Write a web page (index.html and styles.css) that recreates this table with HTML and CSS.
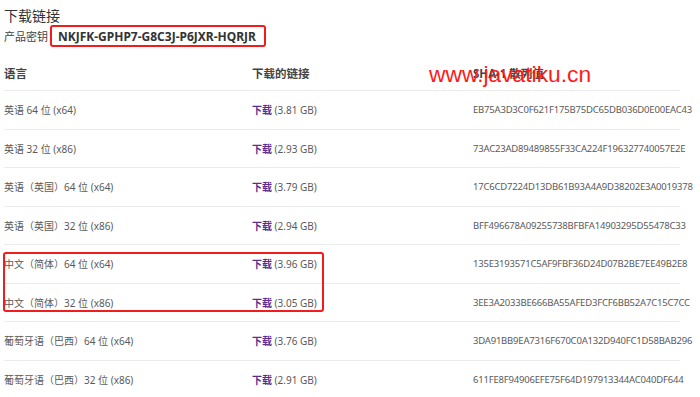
FILE: index.html
```html
<!DOCTYPE html>
<html lang="zh-CN">
<head>
  <meta charset="UTF-8" />
  <title>下载链接</title>
  <link rel="stylesheet" href="styles.css">
</head>
<body>
  <div class="page">
    <h2 class="title">下载链接</h2>
    <div class="key-line">
      <span class="key-label">产品密钥：</span>
      <span class="key-box">NKJFK-GPHP7-G8C3J-P6JXR-HQRJR</span>
    </div>

    <div class="downloads">
      <div class="row head">
        <div>语言</div>
        <div>下载的链接</div>
        <div>SHA-1 散列值</div>
      </div>

      <div class="row">
        <div>英语 64 位 (x64)</div>
        <div><a href="#">下载</a> (3.81 GB)</div>
        <div class="hash">EB75A3D3C0F621F175B75DC65DB036D0E00EAC43</div>
      </div>
      <div class="row">
        <div>英语 32 位 (x86)</div>
        <div><a href="#">下载</a> (2.93 GB)</div>
        <div class="hash">73AC23AD89489855F33CA224F196327740057E2E</div>
      </div>
      <div class="row">
        <div>英语（英国）64 位 (x64)</div>
        <div><a href="#">下载</a> (3.79 GB)</div>
        <div class="hash">17C6CD7224D13DB61B93A4A9D38202E3A0019378</div>
      </div>
      <div class="row">
        <div>英语（英国）32 位 (x86)</div>
        <div><a href="#">下载</a> (2.94 GB)</div>
        <div class="hash">BFF496678A09255738BFBFA14903295D55478C33</div>
      </div>

      <!-- 标红的两行 -->
      <div class="highlight">
        <div class="row">
          <div>中文（简体）64 位 (x64)</div>
          <div><a href="#">下载</a> (3.96 GB)</div>
          <div class="hash">135E3193571C5AF9FBF36D24D07B2BE7EE49B2E8</div>
        </div>
        <div class="row">
          <div>中文（简体）32 位 (x86)</div>
          <div><a href="#">下载</a> (3.05 GB)</div>
          <div class="hash">3EE3A2033BE666BA55AFED3FCF6BB52A7C15C7CC</div>
        </div>
      </div>

      <div class="row">
        <div>葡萄牙语（巴西）64 位 (x64)</div>
        <div><a href="#">下载</a> (3.76 GB)</div>
        <div class="hash">3DA91BB9EA7316F670C0A132D940FC1D58BAB296</div>
      </div>
      <div class="row">
        <div>葡萄牙语（巴西）32 位 (x86)</div>
        <div><a href="#">下载</a> (2.91 GB)</div>
        <div class="hash">611FE8F94906EFE75F64D197913344AC040DF644</div>
      </div>
    </div>
  </div>

  <div class="watermark">www.javatiku.cn</div>
</body>
</html>
```

FILE: styles.css
```css
body {
  margin: 0;
  background: #fff;
  color: #555;
  font-family: 'Noto Sans', 'Noto Sans CJK SC', sans-serif;
  overflow: hidden;
}

.page {
  width: 676px;
  padding-left: 4px;
}

.title {
  margin: 6px 0 0;
  font-size: 14px;
  line-height: 20px;
  font-weight: normal;
  color: #333;
}

.key-line {
  display: flex;
  align-items: center;
  height: 22px;
  margin-top: -1px;
  font-size: 11px;
  color: #444;
}

.key-label {
  margin-right: -9px;
}

.key-box {
  display: flex;
  align-items: center;
  height: 18px;
  padding: 0 8px 0 6px;
  border: 2px solid #f21c1c;
  border-radius: 3px;
  font-weight: bold;
  font-size: 12px;
  color: #333;
}

.row {
  display: grid;
  grid-template-columns: 248px 221px 1fr;
  align-items: center;
  height: 37.5px;
  border-bottom: 1px solid #ebebeb;
  font-size: 10px;
  color: #5a5a5a;
  white-space: nowrap;
}

.row.head {
  height: 44px;
  padding-top: 8px;
  box-sizing: border-box;
  font-size: 11.5px;
  font-weight: bold;
  color: #444;
}

.row a {
  color: #5c2d91;
  font-weight: bold;
  text-decoration: none;
}

.size {
  font-size: 9.5px;
}

.hash {
  font-size: 9.5px;
  letter-spacing: -0.2px;
}

.highlight {
  position: relative;
}

.highlight::after {
  content: "";
  position: absolute;
  left: -1px;
  top: 7px;
  width: 317px;
  height: 56px;
  border: 2px solid #f21c1c;
  border-radius: 3px;
  pointer-events: none;
}

.watermark {
  position: absolute;
  left: 429px;
  top: 63px;
  font-family: 'Liberation Sans', Arial, sans-serif;
  font-size: 22.8px;
  line-height: 1;
  color: #ff1a1a;
}
```
